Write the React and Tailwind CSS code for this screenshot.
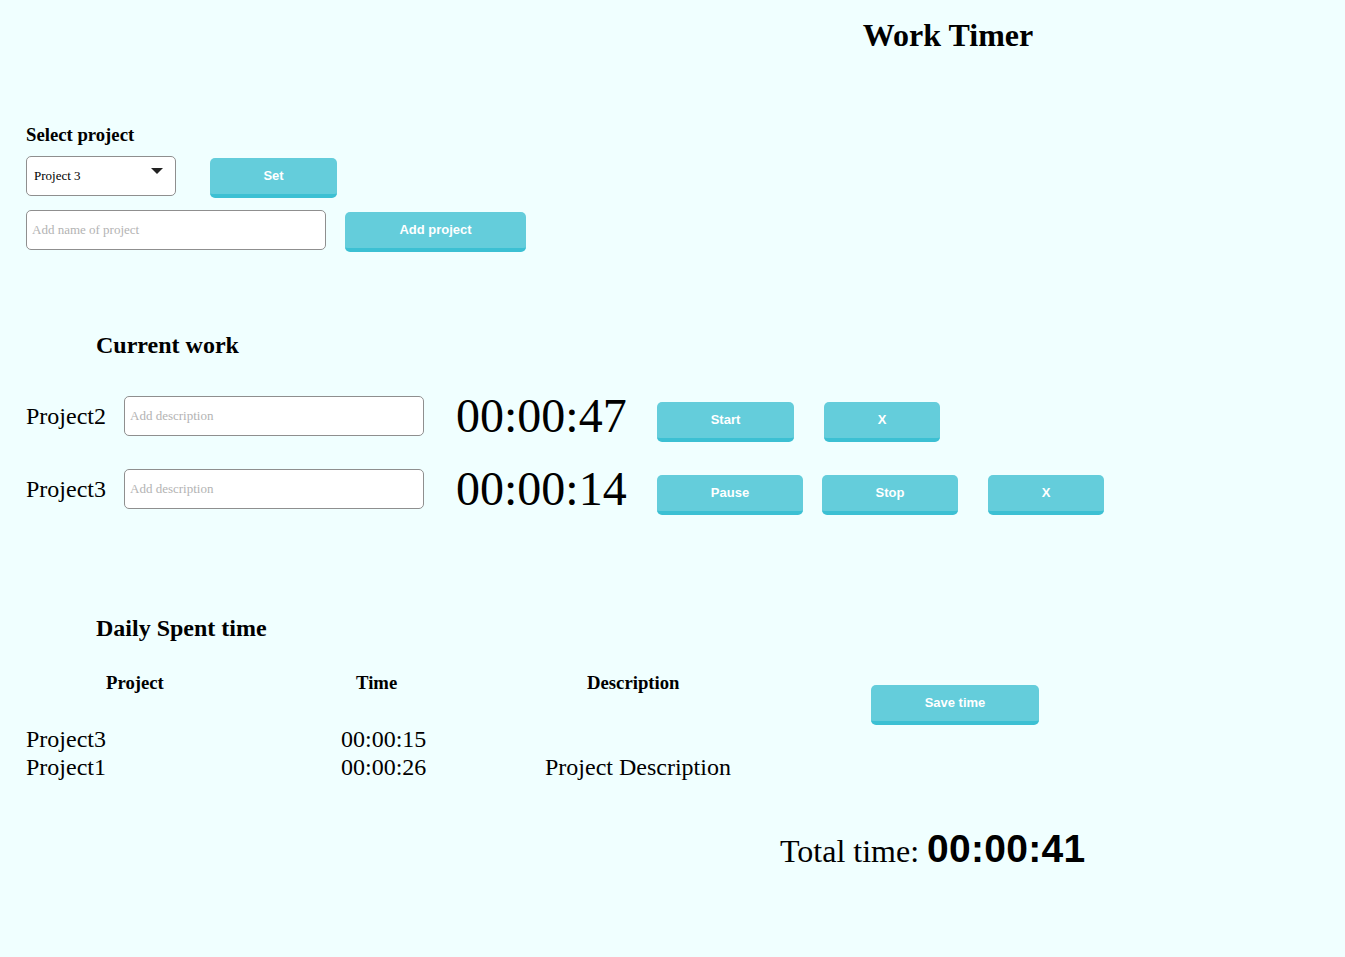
import React, { useState } from "react";

const Button = ({ children, className = "" }) => (
  <button
    type="button"
    className={`h-[40px] flex items-center justify-center bg-[#64cddb] border-b-4 border-[#3cc0d3] rounded-[5px] text-white text-[13px] font-bold font-['Liberation_Sans',Arial,sans-serif] ${className}`}
  >
    {children}
  </button>
);

const WorkRow = ({ name, time, running, className = "" }) => (
  <div className={`flex items-center ${className}`}>
    <div className="w-[98px] text-[24px] leading-[28px]">{name}</div>
    <input
      type="text"
      placeholder="Add description"
      className="w-[300px] h-[40px] bg-white border border-[#8f8f8f] rounded-[5px] px-[5px] text-[13px] placeholder:text-[#b3b3b3] outline-none"
    />
    <div className="ml-[32px] w-[201px] text-[48px] leading-[56px]">{time}</div>
    {running ? (
      <>
        <Button className="mt-[12px] w-[146px]">Pause</Button>
        <Button className="mt-[12px] ml-[19px] w-[136px]">Stop</Button>
        <Button className="mt-[12px] ml-[30px] w-[116px]">X</Button>
      </>
    ) : (
      <>
        <Button className="mt-[12px] w-[137px]">Start</Button>
        <Button className="mt-[12px] ml-[30px] w-[116px]">X</Button>
      </>
    )}
  </div>
);

const App = () => {
  const [project, setProject] = useState("Project 3");

  const spent = [
    { name: "Project3", time: "00:00:15", description: "" },
    { name: "Project1", time: "00:00:26", description: "Project Description" },
  ];

  return (
    <div className="min-h-[957px] bg-[#f0ffff] text-black font-['Liberation_Serif','Times_New_Roman',serif] pt-[15px] pl-[26px]">
      {/* Title */}
      <h1 className="pl-[525px] text-center text-[32px] leading-[40px] font-bold">Work Timer</h1>

      {/* Select project */}
      <h3 className="mt-[68px] text-[18.72px] leading-[24px] font-bold">Select project</h3>
      <div className="mt-[9px] flex items-start">
        <div className="relative w-[150px] h-[40px]">
          <select
            value={project}
            onChange={(e) => setProject(e.target.value)}
            className="appearance-none w-full h-full bg-white border border-[#8f8f8f] rounded-[5px] pl-[7px] text-[13px] outline-none"
          >
            <option>Project 1</option>
            <option>Project 2</option>
            <option>Project 3</option>
          </select>
          <svg className="absolute right-[13px] top-[12px] pointer-events-none" width="12" height="6" viewBox="0 0 12 6">
            <path d="M0 0 L12 0 L6 6 Z" fill="#222" />
          </svg>
        </div>
        <Button className="ml-[34px] mt-[2px] w-[127px]">Set</Button>
      </div>
      <div className="mt-[12px] flex items-start">
        <input
          type="text"
          placeholder="Add name of project"
          className="w-[300px] h-[40px] bg-white border border-[#8f8f8f] rounded-[5px] px-[5px] text-[13px] placeholder:text-[#b3b3b3] outline-none"
        />
        <Button className="ml-[19px] mt-[2px] w-[181px]">Add project</Button>
      </div>

      {/* Current work */}
      <h2 className="mt-[77px] pl-[70px] text-[24px] leading-[32px] font-bold">Current work</h2>
      <WorkRow className="mt-[27px]" name="Project2" time="00:00:47" />
      <WorkRow className="mt-[17px]" name="Project3" time="00:00:14" running />

      {/* Daily spent time */}
      <h2 className="mt-[95px] pl-[70px] text-[24px] leading-[32px] font-bold">Daily Spent time</h2>
      <div className="mt-[27px] flex items-start">
        <div className="w-[845px] grid grid-cols-[315px_204px_326px]">
          <div className="pl-[80px] text-[18.72px] leading-[24px] font-bold">Project</div>
          <div className="pl-[15px] text-[18.72px] leading-[24px] font-bold">Time</div>
          <div className="pl-[42px] text-[18.72px] leading-[24px] font-bold">Description</div>
          {spent.map((row, i) => (
            <React.Fragment key={row.name}>
              <div className={`text-[24px] leading-[28px] ${i === 0 ? "mt-[30px]" : ""}`}>{row.name}</div>
              <div className={`text-[24px] leading-[28px] ${i === 0 ? "mt-[30px]" : ""}`}>{row.time}</div>
              <div className={`text-[24px] leading-[28px] ${i === 0 ? "mt-[30px]" : ""}`}>{row.description}</div>
            </React.Fragment>
          ))}
        </div>
        <Button className="mt-[14px] w-[168px]">Save time</Button>
      </div>

      {/* Total */}
      <div className="mt-[46px] ml-[754px] text-[32px] leading-[44px]">
        Total time:{" "}
        <span className="font-['Liberation_Sans',Arial,sans-serif] font-bold text-[39px] tracking-[0.3px]">00:00:41</span>
      </div>
    </div>
  );
};

export default App;
